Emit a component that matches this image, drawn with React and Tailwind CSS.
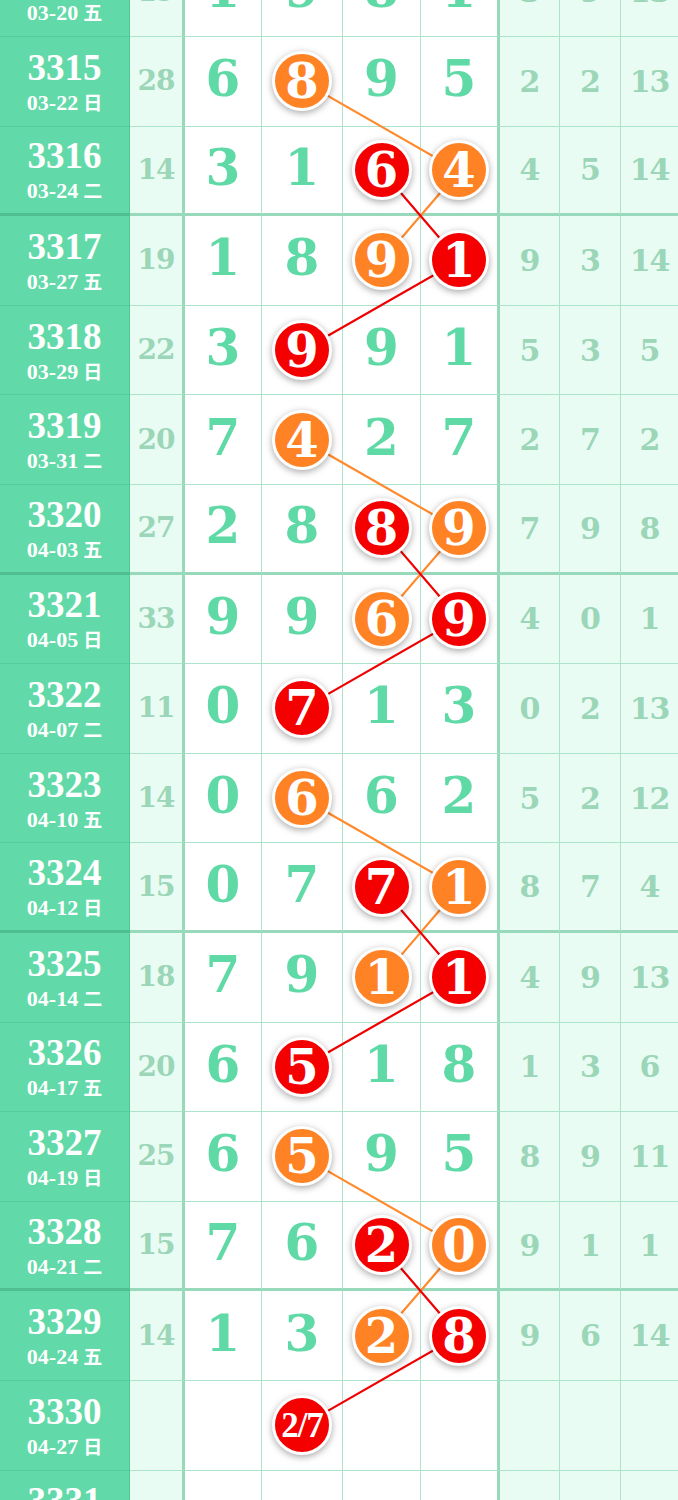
import React from 'react';

const ROW_H = 89.6;

// draw rows: no, date, weekday, sum, four numbers, three tails
const rows = [
  { no: '3314', date: '03-20', wk: '五', sum: '19', n: ['1', '9', '8', '1'], r: ['3', '9', '13'] },
  { no: '3315', date: '03-22', wk: '日', sum: '28', n: ['6', '8', '9', '5'], r: ['2', '2', '13'], b: { 1: 'o' } },
  { no: '3316', date: '03-24', wk: '二', sum: '14', n: ['3', '1', '6', '4'], r: ['4', '5', '14'], b: { 2: 'r', 3: 'o' }, thick: true },
  { no: '3317', date: '03-27', wk: '五', sum: '19', n: ['1', '8', '9', '1'], r: ['9', '3', '14'], b: { 2: 'o', 3: 'r' } },
  { no: '3318', date: '03-29', wk: '日', sum: '22', n: ['3', '9', '9', '1'], r: ['5', '3', '5'], b: { 1: 'r' } },
  { no: '3319', date: '03-31', wk: '二', sum: '20', n: ['7', '4', '2', '7'], r: ['2', '7', '2'], b: { 1: 'o' } },
  { no: '3320', date: '04-03', wk: '五', sum: '27', n: ['2', '8', '8', '9'], r: ['7', '9', '8'], b: { 2: 'r', 3: 'o' }, thick: true },
  { no: '3321', date: '04-05', wk: '日', sum: '33', n: ['9', '9', '6', '9'], r: ['4', '0', '1'], b: { 2: 'o', 3: 'r' } },
  { no: '3322', date: '04-07', wk: '二', sum: '11', n: ['0', '7', '1', '3'], r: ['0', '2', '13'], b: { 1: 'r' } },
  { no: '3323', date: '04-10', wk: '五', sum: '14', n: ['0', '6', '6', '2'], r: ['5', '2', '12'], b: { 1: 'o' } },
  { no: '3324', date: '04-12', wk: '日', sum: '15', n: ['0', '7', '7', '1'], r: ['8', '7', '4'], b: { 2: 'r', 3: 'o' }, thick: true },
  { no: '3325', date: '04-14', wk: '二', sum: '18', n: ['7', '9', '1', '1'], r: ['4', '9', '13'], b: { 2: 'o', 3: 'r' } },
  { no: '3326', date: '04-17', wk: '五', sum: '20', n: ['6', '5', '1', '8'], r: ['1', '3', '6'], b: { 1: 'r' } },
  { no: '3327', date: '04-19', wk: '日', sum: '25', n: ['6', '5', '9', '5'], r: ['8', '9', '11'], b: { 1: 'o' } },
  { no: '3328', date: '04-21', wk: '二', sum: '15', n: ['7', '6', '2', '0'], r: ['9', '1', '1'], b: { 2: 'r', 3: 'o' }, thick: true },
  { no: '3329', date: '04-24', wk: '五', sum: '14', n: ['1', '3', '2', '8'], r: ['9', '6', '14'], b: { 2: 'o', 3: 'r' } },
  { no: '3330', date: '04-27', wk: '日', sum: '', n: ['', '2/7', '', ''], r: ['', '', ''], b: { 1: 'r' } },
  { no: '3331', date: '04-29', wk: '二', sum: '', n: ['', '', '', ''], r: ['', '', ''] },
];

const colX = [223.5, 302.5, 382, 459];
const cy = (i) => ROW_H * i + ROW_H / 2;

const orangeLines = [];
const redLines = [];
for (let g = 0; g < 4; g++) {
  const s = 1 + g * 4;
  orangeLines.push([[colX[1], cy(s)], [colX[3], cy(s + 1)], [colX[2], cy(s + 2)]]);
  redLines.push([[colX[2], cy(s + 1)], [colX[3], cy(s + 2)], [colX[1], cy(s + 3)]]);
}

const numW = ['w-[77px]', 'w-[81px]', 'w-[78px]', 'w-[79px]'];
const tailW = ['w-[60px]', 'w-[61px]', 'flex-1'];

function Ball({ v, color }) {
  const bg = color === 'o' ? 'bg-[#ff8224]' : 'bg-[#f50000]';
  const small = v.length > 1;
  return (
    <div
      className={`relative z-10 w-[60px] h-[60px] rounded-full border-[3px] border-white ${bg} shadow-[0_2px_7px_rgba(0,0,0,0.35)] flex items-center justify-center text-white font-bold leading-none ${
        small ? "text-[35px] font-['Liberation_Serif',serif] tracking-[-1px]" : "text-[48px] font-['DejaVu_Serif',serif]"
      }`}
    >
      {v}
    </div>
  );
}

function Row({ row }) {
  const bb = row.thick ? 'border-b-[3px]' : 'border-b';
  const bc = row.thick ? 'border-b-[#98d9bc]' : 'border-b-[#ade3ca]';
  return (
    <div className="flex h-[89.6px]">
      <div className={`w-[130px] bg-[#62d9a8] border-r border-r-[#52c896] ${bb} ${row.thick ? 'border-b-[#4fbf8f]' : 'border-b-[#56cd9c]'} flex flex-col items-center justify-center text-white font-bold font-['Liberation_Serif','Noto_Sans_CJK_SC',serif]`}>
        <div className="text-[37px] leading-none">{row.no}</div>
        <div className="text-[22px] leading-none mt-[6px] flex items-baseline gap-[5px]">
          <span>{row.date}</span>
          <span className="text-[19px] font-['Noto_Sans_CJK_SC',sans-serif]">{row.wk}</span>
        </div>
      </div>
      <div className={`w-[55px] bg-[#e9fcf4] border-r-[3px] border-r-[#98d9bc] ${bb} ${bc} flex items-center justify-center text-[28px] tracking-[-1px] font-bold text-[#9ad6b7] font-['DejaVu_Serif',serif]`}>
        {row.sum}
      </div>
      {row.n.map((v, i) => {
        const ball = row.b && row.b[i];
        return (
          <div
            key={i}
            className={`${numW[i]} bg-white ${i === 3 ? 'border-r-[3px] border-r-[#98d9bc]' : 'border-r border-r-[#ade3ca]'} ${bb} ${bc} flex items-center justify-center`}
          >
            {ball ? (
              <Ball v={v} color={ball} />
            ) : (
              <span className="text-[50px] leading-none font-bold text-[#5fd9a6] font-['DejaVu_Serif',serif] pb-[4px]">{v}</span>
            )}
          </div>
        );
      })}
      {row.r.map((v, i) => (
        <div
          key={i}
          className={`${tailW[i]} bg-[#e9fcf4] ${i < 2 ? 'border-r border-r-[#ade3ca]' : ''} ${bb} ${bc} flex items-center justify-center text-[30px] tracking-[-1px] font-bold text-[#9ad6b7] font-['DejaVu_Serif',serif]`}
        >
          {v}
        </div>
      ))}
    </div>
  );
}

export default function App() {
  return (
    <div className="w-[678px] h-[1500px] overflow-hidden bg-white">
      <div className="relative -mt-[52.6px]">
        {rows.map((row) => (
          <Row key={row.no} row={row} />
        ))}
        <svg className="absolute left-0 top-0 pointer-events-none" width="678" height={ROW_H * rows.length}>
          {orangeLines.map((pts, i) => (
            <polyline key={'o' + i} points={pts.map((p) => p.join(',')).join(' ')} fill="none" stroke="#ff8a2c" strokeWidth="2.2" />
          ))}
          {redLines.map((pts, i) => (
            <polyline key={'r' + i} points={pts.map((p) => p.join(',')).join(' ')} fill="none" stroke="#f00000" strokeWidth="2.2" />
          ))}
        </svg>
      </div>
    </div>
  );
}
